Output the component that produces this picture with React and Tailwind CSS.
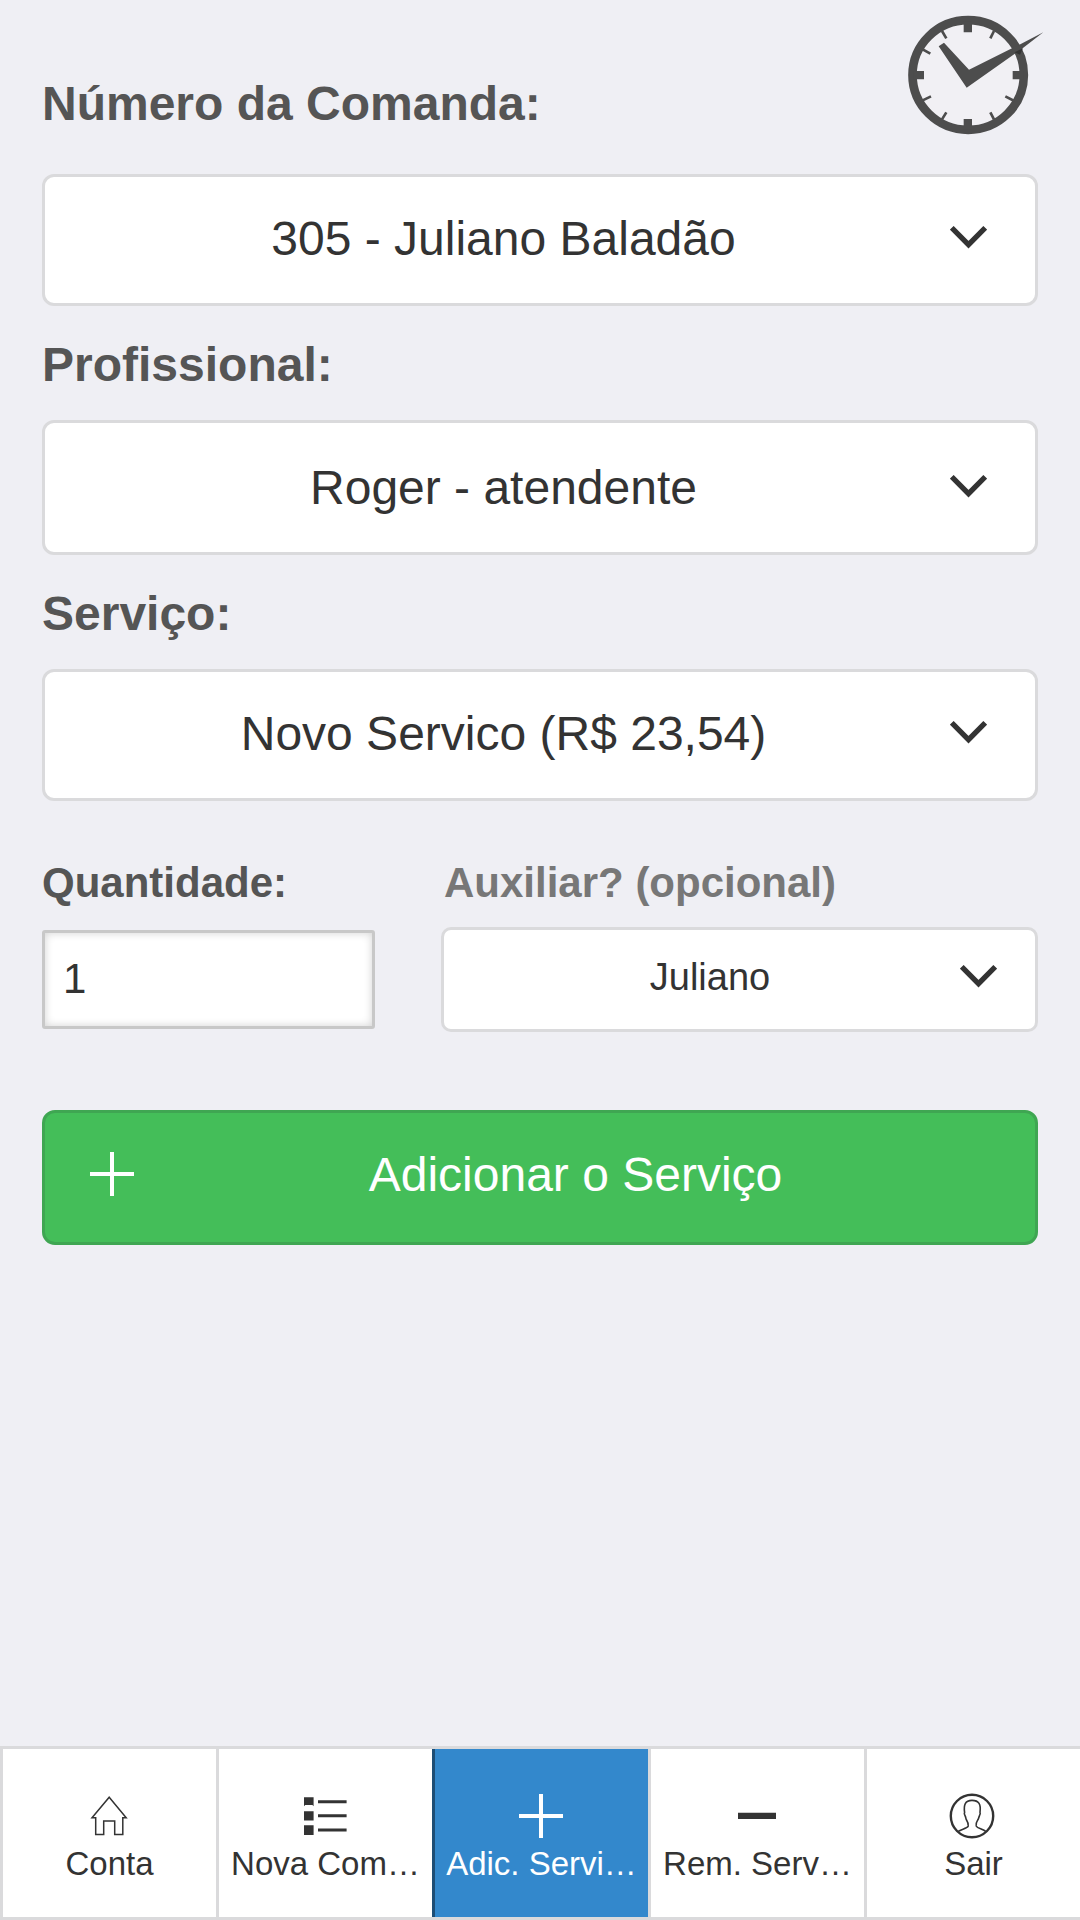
import React from 'react';

const ChevronDown = ({ className }) => (
  <svg className={className} viewBox="0 0 37 23" fill="none" stroke="#333333" strokeWidth="5.2">
    <path d="M1.8 1.8 18.5 18.7 35.2 1.8" />
  </svg>
);

const PlusIcon = ({ className }) => (
  <svg className={className} viewBox="0 0 44 44" fill="none" stroke="currentColor" strokeWidth="4">
    <path d="M22 0V44M0 22H44" />
  </svg>
);

const HomeIcon = () => (
  <svg className="h-[44px] w-[44px]" viewBox="0 0 44 44" fill="none" stroke="currentColor" strokeWidth="1.5">
    <path d="M22.2 3.2 39.2 23.8H35.8V40.4H27.7V27H16.7V40.4H8.7V23.8H5L22.2 3.2Z" />
  </svg>
);

const ListIcon = () => (
  <svg className="h-[44px] w-[44px]" viewBox="0 0 44 44" fill="currentColor">
    <path d="M1 3.3H10.6V12.3L9.4 11H2.2L1 12.3ZM1 17.3H10.6V26.5H1ZM1 31.3H10.6V41H1Z" />
    <path d="M15 6.3H43.6V9.3H15ZM15 20.3H43.6V23.3H15ZM15 34.6H43.6V37.4H15Z" />
  </svg>
);

const MinusIcon = () => (
  <svg className="h-[44px] w-[44px]" viewBox="0 0 44 44" fill="currentColor">
    <path d="M3 18.7H41V25H3Z" />
  </svg>
);

const UserIcon = () => (
  <svg className="-my-px mr-px h-[46px] w-[46px]" viewBox="0 0 46 46" fill="none" stroke="currentColor">
    <circle cx="23" cy="23" r="21.2" strokeWidth="2.4" />
    <path
      strokeWidth="1.6"
      d="M9.3 38.3C12 36.2 18.6 35.4 19.2 33C19.7 30.4 18.4 28.4 17.3 26.6C16.7 25.4 17 24.4 15.9 22.4C15.2 21.2 15.1 20.3 15.6 19.3C14.6 12 16 7.4 23 7.4C30 7.4 32.1 11.5 31 19.3C31.5 20.3 31.2 21.4 30.5 22.6C29.6 24.6 29.8 25.4 28.9 26.8C27.4 29.2 26.4 30.4 27.2 33C28.2 35.2 34 36.2 36.7 38.3"
    />
  </svg>
);

const ClockLogo = () => (
  <svg className="absolute top-0 right-[20px] h-[150px] w-[170px]" viewBox="0 0 510 450">
    <ellipse cx="234.5" cy="225" rx="167" ry="164.5" fill="#f1f0f4" stroke="#4d4d4d" strokeWidth="26" />
    <path fill="#4d4d4d" d="M221 65H246V97H221ZM221 357H246V388H221ZM70 213H102V238H70ZM368 213H400V238H368Z" />
    <path
      stroke="#4d4d4d"
      strokeWidth="8"
      d="M156 93 169 115M312 93 301 115M98 148 121 161M98 301 123 289M156 358 169 337M312 358 301 337M373 303 346 289"
    />
    <path fill="#4d4d4d" d="M146 139 162 128 237 209 388 134 460 97 396 146 230 263Z" />
    <path fill="#343434" d="M373 157 399 145 390 164Z" />
  </svg>
);

const SelectField = ({ value, className }) => (
  <button className={`flex w-full items-center rounded-[12px] border-3 border-[#dadadc] bg-white ${className}`}>
    <span className="flex-1 pt-[2px] text-center text-[48px] leading-[60px]">{value}</span>
    <ChevronDown className="-ml-[12px] mr-[48px] h-[23px] w-[37px]" />
  </button>
);

const tabs = [
  { title: 'Conta', icon: <HomeIcon /> },
  { title: 'Nova Com…', icon: <ListIcon /> },
  { title: 'Adic. Servi…', icon: <PlusIcon className="h-[44px] w-[44px]" />, active: true },
  { title: 'Rem. Serv…', icon: <MinusIcon /> },
  { title: 'Sair', icon: <UserIcon /> },
];

const App = () => {
  return (
    <div className="relative flex h-[1920px] w-[1080px] flex-col overflow-hidden bg-[#efeff4] font-['Liberation_Sans',Arial,sans-serif] text-[#333333]">
      <ClockLogo />

      {/* Form */}
      <main className="flex flex-col px-[42px] pt-[74px]">
        <label className="mb-[40px] text-[48px] leading-[60px] font-bold text-[#555555]">Número da Comanda:</label>
        <SelectField value="305 - Juliano Baladão" className="h-[132px] pb-[5px]" />

        <label className="mt-[29px] mb-[25px] text-[48px] leading-[60px] font-bold text-[#555555]">Profissional:</label>
        <SelectField value="Roger - atendente" className="h-[135px] pb-[2px]" />

        <label className="mt-[29px] mb-[25px] text-[48px] leading-[60px] font-bold text-[#555555]">Serviço:</label>
        <SelectField value="Novo Servico (R$ 23,54)" className="h-[132px] pb-[5px]" />

        <div className="mt-[57px] flex gap-[66px]">
          <div className="flex w-[333px] flex-col">
            <label className="mb-[22px] text-[42px] leading-[50px] font-bold text-[#555555]">Quantidade:</label>
            <input
              type="text"
              defaultValue="1"
              className="h-[99px] w-full rounded-[3px] border-3 border-[#c8c8c8] bg-white px-[18px] pb-px text-[42px] shadow-[inset_0_0_8px_rgba(0,0,0,0.18)] outline-none"
            />
          </div>
          <div className="flex flex-1 flex-col">
            <label className="mb-[19px] pl-[3px] text-[42px] leading-[50px] font-bold text-[#777777]">
              Auxiliar? (opcional)
            </label>
            <button className="flex h-[105px] items-center rounded-[10px] border-3 border-[#dadadc] bg-white pb-[6px]">
              <span className="flex-1 text-center text-[38px] leading-[48px]">Juliano</span>
              <ChevronDown className="-ml-[16px] mr-[38px] h-[23px] w-[37px]" />
            </button>
          </div>
        </div>

        <button className="mt-[78px] flex h-[135px] items-center rounded-[13px] border-3 border-[#3fa652] bg-[#44be59] pb-[7px] text-white">
          <PlusIcon className="ml-[45px] -mr-[18px] h-[44px] w-[44px]" />
          <span className="flex-1 pt-[2px] text-center text-[48px] leading-[60px]">Adicionar o Serviço</span>
        </button>
      </main>

      {/* Bottom tabs */}
      <nav className="mt-auto flex h-[174px] border-y-3 border-[#dadadc]">
        {tabs.map((tab) => (
          <button
            key={tab.title}
            className={`flex w-[216px] flex-col items-center border-l-3 pt-[45px] pr-[2px] ${
              tab.active ? 'border-[#1d4e76] bg-[#3388cc] text-white' : 'border-[#dadadc] bg-white'
            }`}
          >
            {tab.icon}
            <span className="mt-[6px] pl-[2px] text-[33px] leading-[40px] whitespace-nowrap">{tab.title}</span>
          </button>
        ))}
      </nav>
    </div>
  );
};

export default App;
